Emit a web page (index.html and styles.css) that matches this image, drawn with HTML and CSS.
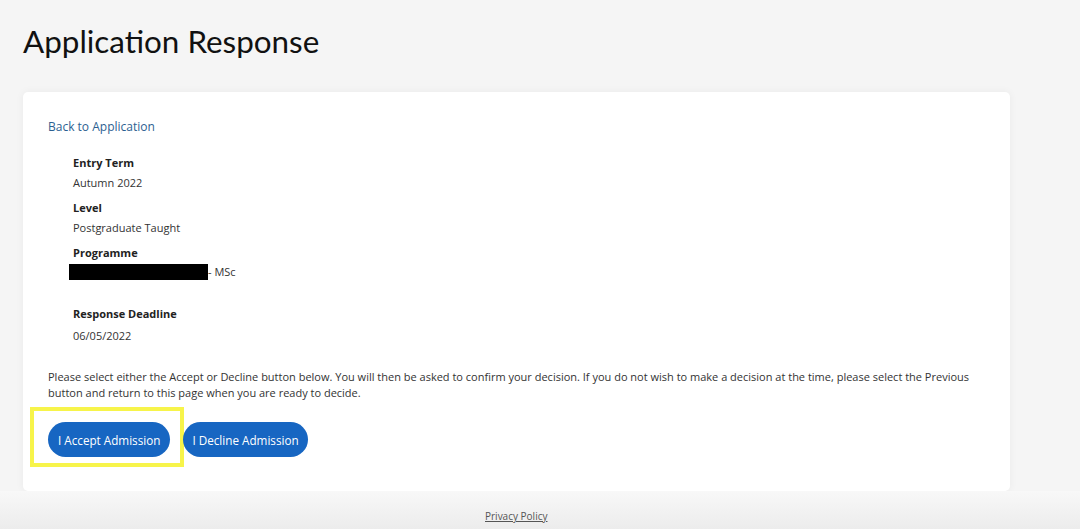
FILE: index.html
```html
<!DOCTYPE html>
<html lang="en">
<head>
<meta charset="utf-8">
<title>Application Response</title>
<link rel="stylesheet" href="styles.css">
</head>
<body>
<div class="page">
  <h1 class="title">Application Response</h1>
  <main class="card">
    <a class="back-link" href="#">Back to Application</a>
    <dl class="details">
      <dt>Entry Term</dt>
      <dd>Autumn 2022</dd>
      <dt>Level</dt>
      <dd>Postgraduate Taught</dd>
      <dt>Programme</dt>
      <dd class="programme"><span class="redacted"></span>- MSc</dd>
      <dt class="deadline">Response Deadline</dt>
      <dd class="deadline-date">06/05/2022</dd>
    </dl>
    <p class="instructions">Please select either the Accept or Decline button below. You will then be asked to confirm your decision. If you do not wish to make a decision at the time, please select the Previous button and return to this page when you are ready to decide.</p>
    <div class="actions">
      <div class="highlight">
        <button class="btn" type="button">I Accept Admission</button>
      </div>
      <button class="btn btn-decline" type="button">I Decline Admission</button>
    </div>
  </main>
  <footer class="footer">
    <a class="privacy" href="#">Privacy Policy</a>
  </footer>
</div>
</body>
</html>
```
FILE: styles.css
```css
* { box-sizing: border-box; }
html, body { margin: 0; padding: 0; }
body {
  background: #f5f5f5;
  font-family: "Open Sans", "Liberation Sans", sans-serif;
  color: #333;
  height: 529px;
  overflow: hidden;
}
.page {
  width: 1010px;
  padding-left: 23px;
}
.title {
  margin: 0;
  padding-top: 21px;
  font-family: "Lato", "Open Sans", sans-serif;
  font-weight: 400;
  font-size: 31.4px;
  line-height: 40px;
  color: #111;
}
.card {
  margin-top: 31px;
  background: #fff;
  border-radius: 5px;
  box-shadow: 0 0 8px rgba(0,0,0,0.05);
  height: 399px;
  padding: 25px 25px 0 25px;
  font-size: 11px;
  line-height: 16px;
}
.back-link {
  display: block;
  color: #2d5f91;
  text-decoration: none;
  font-size: 12px;
  line-height: 18px;
  margin-top: 1px;
}
.details {
  margin: 19px 0 0 25px;
}
.details dt {
  font-weight: 700;
  color: #222;
  line-height: 16px;
}
.details dd {
  margin: 4px 0 9px 0;
  line-height: 16px;
}
.details .programme {
  display: flex;
  align-items: center;
  margin-left: -4px;
  margin-top: 3px;
}
.redacted {
  display: inline-block;
  width: 139px;
  height: 16px;
  background: #000;
}
.details dt.deadline {
  margin-top: 26px;
}
.details dd.deadline-date {
  margin-top: 6px;
  margin-bottom: 0;
}
.instructions {
  margin: 25px 0 0 0;
  max-width: 925px;
  line-height: 16px;
}
.actions {
  display: flex;
  align-items: flex-start;
  margin-top: 6px;
  margin-left: -18px;
}
.highlight {
  border: 4px solid #f7f44a;
  padding: 11px 10px 6px 14px;
}
.btn {
  background: #1766c2;
  color: #fff;
  border: none;
  border-radius: 18px;
  height: 35px;
  padding: 0 10px;
  font-family: "Open Sans", "Liberation Sans", sans-serif;
  font-size: 11.7px;
}
.btn-decline {
  margin-left: -1px;
  margin-top: 15px;
  padding: 0 9px;
}
.footer {
  height: 38px;
  margin-left: -23px;
  width: 1080px;
  background: linear-gradient(#f8f8f8, #ececec);
  display: flex;
  padding-left: 485px;
  padding-top: 18px;
}
.privacy {
  color: #555;
  font-size: 10px;
  line-height: 14px;
}
```
